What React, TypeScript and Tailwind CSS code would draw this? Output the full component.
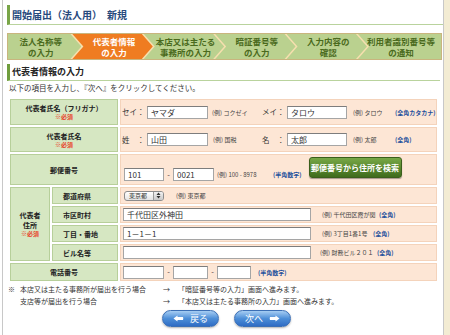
const jp = "font-['Noto_Sans_CJK_JP','Noto_Sans_CJK_SC',sans-serif]"

const steps = [
  ['法人名称等', 'の入力'],
  ['代表者情報', 'の入力'],
  ['本店又は主たる', '事務所の入力'],
  ['暗証番号等', 'の入力'],
  ['入力内容の', '確認'],
  ['利用者識別番号等', 'の通知'],
]

function StepBar() {
  return (
    <div className="mt-[8px] ml-[4px] mr-[1px] flex h-[27px] border border-[#c9b57e] bg-[#f6dfae]">
      {steps.map(([a, b], i) => {
        const active = i === 1
        const shape =
          i === 0
            ? '[clip-path:polygon(0_0,calc(100%_-_11px)_0,100%_50%,calc(100%_-_11px)_100%,0_100%)]'
            : i === steps.length - 1
              ? '[clip-path:polygon(0_0,100%_0,100%_100%,0_100%,11px_50%)]'
              : '[clip-path:polygon(0_0,calc(100%_-_11px)_0,100%_50%,calc(100%_-_11px)_100%,0_100%,11px_50%)]'
        return (
          <div
            key={a}
            className={`${shape} ${i === 0 ? 'pr-[8px]' : '-ml-[9px] pl-[9px] pr-[6px]'} ${
              active ? 'bg-[#ef7c21] text-white' : 'bg-[#bad18f] text-[#4a6a1d]'
            } flex flex-1 flex-col items-center justify-center text-[8.5px] font-bold leading-[11px] whitespace-nowrap`}
          >
            <span>{a}</span>
            <span>{b}</span>
          </div>
        )
      })}
    </div>
  )
}

function Field({ w, value = '', className = '' }: { w: string; value?: string; className?: string }) {
  return (
    <input
      readOnly
      value={value}
      className={`${w} ${className} h-[13px] border border-[#a5a5a5] border-t-[#7d7d7d] bg-white pl-[3px] text-[8px] leading-[11px] text-[#333] outline-none`}
    />
  )
}

function Ex({ children, className = '' }: { children: React.ReactNode; className?: string }) {
  return <span className={`${className} text-[6px] text-[#444] whitespace-nowrap`}>{children}</span>
}

function Hint({ children }: { children: React.ReactNode }) {
  return <span className="text-[6px] font-bold text-[#1f4f9c] whitespace-nowrap">{children}</span>
}

function Required() {
  return <div className="text-[6px] font-bold leading-[8px] text-[#e8432c]">※必須</div>
}

const labelCell = 'bg-[#d6e7c2] border border-[#b7cf9a] text-[7px] font-bold text-[#222] leading-[10px]'
const valueCell = 'bg-[#fde6d5] border border-[#f4d3bb] text-[7.5px] text-[#333]'

function Arrow({ dir }: { dir: 'l' | 'r' }) {
  return (
    <svg width="11" height="7" viewBox="0 0 11 7" className={dir === 'r' ? 'rotate-180' : ''}>
      <path d="M0.5 3.5 L4.5 0.5 L4.5 2 L10 2 Q10.6 3.5 10 5 L4.5 5 L4.5 6.5 Z" fill="white" />
    </svg>
  )
}

export default function App() {
  return (
    <div className={`${jp} flex h-[335px] w-[450px] overflow-hidden bg-white pl-[2px]`}>
      <main className="w-[442px] shrink-0 border-x border-x-[#c8c8c8]">
        {/* Page title */}
        <h1 className="mt-[5px] ml-[4px] flex h-[20px] items-center border-b border-l-[3px] border-b-[#b9d39d] border-l-[#79a548] pl-[2px] text-[10px] font-bold text-[#274a7d]">
          開始届出（法人用）　新規
        </h1>

        <StepBar />

        {/* Section heading */}
        <h2 className="mt-[4px] ml-[4px] mr-[3px] flex h-[17px] items-center border-b border-l-[3px] border-b-[#b9d39d] border-l-[#6f9d3d] pl-[2px] text-[9px] font-bold text-[#222]">
          代表者情報の入力
        </h2>
        <p className="mt-[2px] ml-[6px] text-[7.5px] leading-[10px] text-[#333]">
          以下の項目を入力し、『次へ』をクリックしてください。
        </p>

        <table className="mt-[4px] ml-[5px] w-[431px] table-fixed border-separate border-spacing-[2px]">
          <colgroup>
            <col className="w-[40px]" />
            <col className="w-[66px]" />
            <col className="w-[317px]" />
          </colgroup>
          <tbody>
            <tr className="h-[26px]">
              <td colSpan={2} className={`${labelCell} text-center`}>
                代表者氏名（フリガナ）
                <Required />
              </td>
              <td className={valueCell}>
                <div className="flex items-center pl-[1px]">
                  <span className="w-[25px]">セイ：</span>
                  <Field w="w-[61px]" value="ヤマダ" />
                  <Ex className="ml-[4px] w-[50px]">(例) コクゼイ</Ex>
                  <span className="w-[25px]">メイ：</span>
                  <Field w="w-[60px]" value="タロウ" />
                  <Ex className="ml-[6px] w-[42px]">(例) タロウ</Ex>
                  <Hint>(全角カタカナ)</Hint>
                </div>
              </td>
            </tr>
            <tr className="h-[25px]">
              <td colSpan={2} className={`${labelCell} text-center`}>
                代表者氏名
                <Required />
              </td>
              <td className={valueCell}>
                <div className="flex items-center pl-[1px]">
                  <span className="w-[25px]">姓　：</span>
                  <Field w="w-[61px]" value="山田" />
                  <Ex className="ml-[5px] w-[49px]">(例) 国税</Ex>
                  <span className="w-[25px]">名　：</span>
                  <Field w="w-[60px]" value="太郎" />
                  <Ex className="ml-[6px] w-[42px]">(例) 太郎</Ex>
                  <Hint>(全角)</Hint>
                </div>
              </td>
            </tr>
            <tr className="h-[31px]">
              <td colSpan={2} className={`${labelCell} text-center`}>
                郵便番号
              </td>
              <td className={valueCell}>
                <div className="flex items-center pl-[3px]">
                  <Field w="w-[40px]" value="101" className="mt-[10px]" />
                  <span className="mt-[10px] w-[9px] text-center">-</span>
                  <Field w="w-[41px]" value="0021" className="mt-[10px]" />
                  <Ex className="mt-[10px] ml-[3px] w-[56px]">(例) 100 - 8978</Ex>
                  <Hint>
                    <span className="mt-[10px] inline-block">(半角数字)</span>
                  </Hint>
                  <button className="mb-[4px] ml-[7px] h-[21px] w-[93px] rounded-[3px] border border-[#3b5f1c] bg-gradient-to-b from-[#78a846] to-[#3f6c1c] text-[8px] font-bold text-white shadow-[0_1px_1px_rgba(0,0,0,0.35)]">
                    郵便番号から住所を検索
                  </button>
                </div>
              </td>
            </tr>
            <tr className="h-[17px]">
              <td rowSpan={4} className={`${labelCell} text-center text-[7.5px] leading-[9px]`}>
                代表者
                <br />
                住所
                <Required />
              </td>
              <td className={`${labelCell} pl-[10px]`}>都道府県</td>
              <td className={valueCell}>
                <div className="flex items-center pl-[3px]">
                  <span className="flex h-[10px] w-[40px] items-center overflow-hidden rounded-[3px] border border-[#8c8c8c] bg-gradient-to-b from-white to-[#e4e4e4] text-[6px] leading-[8px]">
                    <span className="flex-1 pl-[4px]">東京都</span>
                    <span className="flex h-full w-[10px] items-center justify-center border-l border-l-[#9a9a9a] bg-gradient-to-b from-[#f2f2f2] to-[#c9c9c9]">
                      <svg width="5" height="7" viewBox="0 0 5 7">
                        <path d="M2.5 0.5 L4.5 3 L0.5 3 Z M2.5 6.5 L4.5 4 L0.5 4 Z" fill="#333" />
                      </svg>
                    </span>
                  </span>
                  <Ex className="ml-[12px]">(例) 東京都</Ex>
                </div>
              </td>
            </tr>
            <tr className="h-[17px]">
              <td className={`${labelCell} pl-[10px]`}>市区町村</td>
              <td className={valueCell}>
                <div className="flex items-center pl-[2px]">
                  <Field w="w-[188px]" value="千代田区外神田" />
                  <Ex className="ml-[11px] w-[57px]">(例) 千代田区霞が関</Ex>
                  <Hint>(全角)</Hint>
                </div>
              </td>
            </tr>
            <tr className="h-[17px]">
              <td className={`${labelCell} pl-[10px]`}>丁目・番地</td>
              <td className={valueCell}>
                <div className="flex items-center pl-[2px]">
                  <Field w="w-[188px]" value="1－1－1" />
                  <Ex className="ml-[11px] w-[51px]">(例) 3丁目1番1号</Ex>
                  <Hint>(全角)</Hint>
                </div>
              </td>
            </tr>
            <tr className="h-[17px]">
              <td className={`${labelCell} pl-[10px]`}>ビル名等</td>
              <td className={valueCell}>
                <div className="flex items-center pl-[2px]">
                  <Field w="w-[188px]" />
                  <Ex className="ml-[9px] w-[57px]">(例) 財務ビル２０１</Ex>
                  <Hint>(全角)</Hint>
                </div>
              </td>
            </tr>
            <tr className="h-[18px]">
              <td colSpan={2} className={`${labelCell} text-center`}>
                電話番号
              </td>
              <td className={valueCell}>
                <div className="flex items-center pl-[2px]">
                  <Field w="w-[41px]" />
                  <span className="w-[9px] text-center">-</span>
                  <Field w="w-[35px]" />
                  <span className="w-[9px] text-center">-</span>
                  <Field w="w-[34px]" />
                  <span className="ml-[7px]">
                    <Hint>(半角数字)</Hint>
                  </span>
                </div>
              </td>
            </tr>
          </tbody>
        </table>

        {/* Notes */}
        <div className="ml-[5px] grid grid-cols-[12px_143px_15px_1fr] text-[7px] leading-[12px] text-[#333] whitespace-nowrap">
          <span>※</span>
          <span>本店又は主たる事務所が届出を行う場合</span>
          <span>→</span>
          <span>「暗証番号等の入力」画面へ進みます。</span>
          <span />
          <span>支店等が届出を行う場合</span>
          <span>→</span>
          <span>「本店又は主たる事務所の入力」画面へ進みます。</span>
        </div>

        {/* Navigation */}
        <div className="mt-[3px] flex gap-[15px] pl-[159px]">
          <button className="flex h-[17px] w-[57px] items-center justify-center gap-[6px] rounded-full border border-[#3b6fb5] bg-gradient-to-b from-[#a6cdf2] via-[#4d8fd8] to-[#2f6cc4] text-[9px] text-white shadow-[0_1px_2px_rgba(0,0,0,0.3)]">
            <Arrow dir="l" />
            戻る
          </button>
          <button className="flex h-[17px] w-[57px] items-center justify-center gap-[6px] rounded-full border border-[#3b6fb5] bg-gradient-to-b from-[#a6cdf2] via-[#4d8fd8] to-[#2f6cc4] text-[9px] text-white shadow-[0_1px_2px_rgba(0,0,0,0.3)]">
            次へ
            <Arrow dir="r" />
          </button>
        </div>
      </main>
      <div className="flex-1 bg-[#f3ecd3]" />
    </div>
  )
}
